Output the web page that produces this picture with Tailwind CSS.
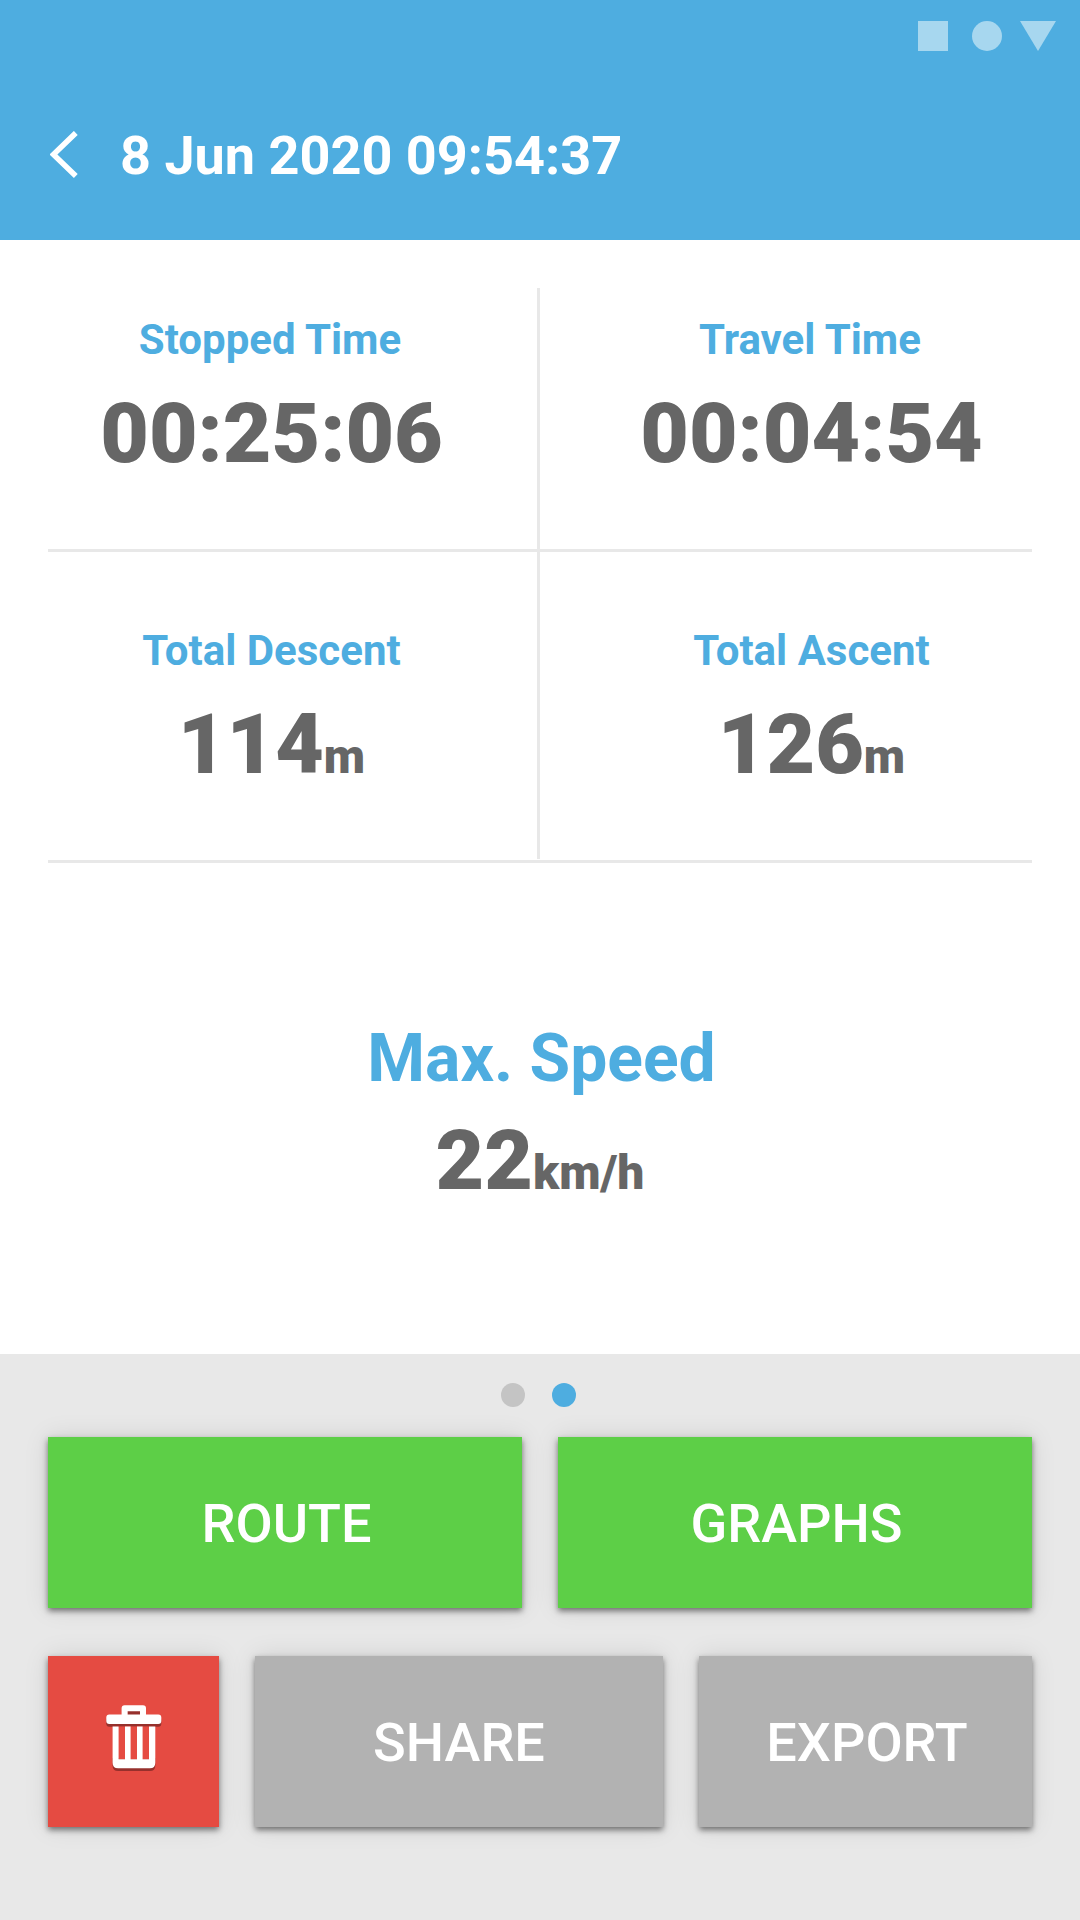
<!DOCTYPE html>
<html lang="en">
<head>
    <meta charset="UTF-8">
    <meta name="viewport" content="width=device-width, initial-scale=1.0">
    <title>Ride details</title>
    <script src="https://cdn.jsdelivr.net/npm/@tailwindcss/browser@4"></script>
</head>
<body class="w-[1080px] h-[1920px] flex flex-col bg-white overflow-hidden font-['Roboto',sans-serif]">
    <header class="h-[240px] shrink-0 bg-[#4eade0] text-white">
        <!-- status bar -->
        <div class="h-[72px] pt-[21px] pr-6 flex justify-end">
            <svg class="w-[138px] h-[30px] fill-[#a7d7ef]" viewBox="0 0 138 30">
                <rect width="30" height="30" />
                <circle cx="69" cy="15" r="15" />
                <path d="M102 0h36l-18 30z" />
            </svg>
        </div>
        <div class="h-[168px] pl-[50px] flex items-start">
            <svg class="w-[28px] h-[48px] mt-[59px]" viewBox="0 0 28 48" fill="none" stroke="#fff" stroke-width="5.5">
                <path d="M25.8 1.9L3.400 23.500l22.400 21.600" />
            </svg>
            <h1 class="ml-[42px] mt-[51px] text-[54px] leading-[66px] font-bold whitespace-nowrap">8 Jun 2020 09:54:37</h1>
        </div>
    </header>

    <main class="h-[1114px] shrink-0 pt-12 text-[#666] font-black text-center">
        <div class="h-[261px] grid grid-cols-[537px_3px_540px]">
            <div class="pt-[26px] pl-[3px]">
                <h2 class="text-[42px] leading-[52px] font-bold text-[#4eade0]">Stopped Time</h2>
                <p class="mt-[18px] pl-[3px] text-[84px] leading-[100px]">00:25:06</p>
            </div>
            <div class="bg-[#e8e8e8]"></div>
            <div class="pt-[26px]">
                <h2 class="text-[42px] leading-[52px] font-bold text-[#4eade0]">Travel Time</h2>
                <p class="mt-[18px] pl-[3px] text-[84px] leading-[100px]">00:04:54</p>
            </div>
        </div>
        <div class="mx-12 h-[3px] bg-[#e8e8e8]"></div>
        <div class="h-[308px] grid grid-cols-[537px_3px_540px]">
            <div class="pt-[73px] pl-[6px]">
                <h2 class="text-[42px] leading-[52px] font-bold text-[#4eade0]">Total Descent</h2>
                <p class="mt-[18px] text-[84px] leading-[100px]">114<span class="text-[48px]">m</span></p>
            </div>
            <div class="mb-px bg-[#e8e8e8]"></div>
            <div class="pt-[73px] pl-[3px]">
                <h2 class="text-[42px] leading-[52px] font-bold text-[#4eade0]">Total Ascent</h2>
                <p class="mt-[18px] text-[84px] leading-[100px]">126<span class="text-[48px]">m</span></p>
            </div>
        </div>
        <div class="mx-12 h-[3px] bg-[#e8e8e8]"></div>
        <div class="pt-[156px]">
            <h2 class="pl-[3px] text-[66px] leading-[80px] font-bold text-[#4eade0]">Max. Speed</h2>
            <p class="mt-[12px] text-[84px] leading-[100px]">22<span class="text-[48px]">km/h</span></p>
        </div>
    </main>

    <footer class="grow bg-[#e8e8e8] px-12 pt-[29px] text-white text-[54px] font-medium">
        <div class="flex justify-center gap-[27px] pr-[3px]">
            <span class="size-6 rounded-full bg-[#c4c4c4]"></span>
            <span class="size-6 rounded-full bg-[#4eade0]"></span>
        </div>
        <div class="mt-[30px] grid grid-cols-2 gap-9">
            <button class="h-[171px] pt-[2px] pl-[3px] bg-[#5dcf47] shadow-[0_3px_6px_rgba(0,0,0,0.5),0_0_24px_rgba(0,0,0,0.1)]">ROUTE</button>
            <button class="h-[171px] pt-[2px] pl-[3px] bg-[#5dcf47] shadow-[0_3px_6px_rgba(0,0,0,0.5),0_0_24px_rgba(0,0,0,0.1)]">GRAPHS</button>
        </div>
        <div class="mt-12 grid grid-cols-[171px_408px_333px] gap-9">
            <button class="h-[171px] pt-[49px] pl-[58px] bg-[#e54b42] shadow-[0_3px_6px_rgba(0,0,0,0.5),0_0_24px_rgba(0,0,0,0.1)] flex items-start" aria-label="Delete">
                <svg class="w-[55px] h-[66px]" viewBox="-0.3 -0.3 55 66" overflow="visible">
                    <!-- drop shadow -->
                    <g fill="#96302c" transform="translate(0 2.7)">
                        <path d="M3 9.300h49q3 0 3 3v3.400q0 3-3 3H3q-3 0-3-3v-3.400q0-3 3-3z" />
                        <path d="M6.300 50H49v7.500q0 5.500-5.500 5.500h-31.700q-5.500 0-5.500-5.500z" />
                        <path d="M21.300 3h12.400v6.300H21.300z" />
                    </g>
                    <!-- gaps between the bars -->
                    <path fill="#e54b42" d="M12.300 21.300h30.400V54H12.300z" />
                    <path fill="#fff" fill-rule="evenodd" d="M18.300 0h18.400q3 0 3 3v6.300H52q3 0 3 3v3.400q0 3-3 3H3q-3 0-3-3v-3.400q0-3 3-3h12.300V3q0-3 3-3zM21.300 6v3.300h12.400V6z" />
                    <path fill="#fff" fill-rule="evenodd" d="M6.300 21.300H49V57.500q0 5.500-5.500 5.500h-31.700q-5.500 0-5.500-5.500zM12.300 21.300V54h6.400V21.300zM24.300 21.300V54h6.400V21.300zM36.300 21.300V54h6.400V21.300z" />
                </svg>
            </button>
            <button class="h-[171px] pt-[2px] bg-[#b2b2b2] shadow-[0_3px_6px_rgba(0,0,0,0.5),0_0_24px_rgba(0,0,0,0.1)]">SHARE</button>
            <button class="h-[171px] pt-[2px] pl-[3px] bg-[#b2b2b2] shadow-[0_3px_6px_rgba(0,0,0,0.5),0_0_24px_rgba(0,0,0,0.1)]">EXPORT</button>
        </div>
    </footer>
</body>
</html>
